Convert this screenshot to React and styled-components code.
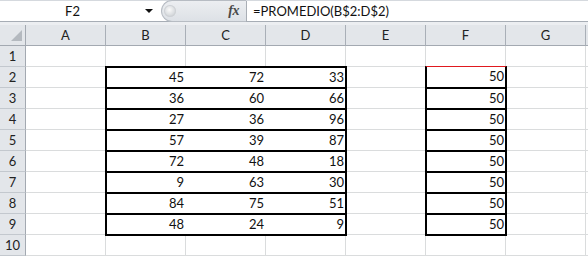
import React from 'react';
import styled, { createGlobalStyle } from 'styled-components';

const GlobalStyle = createGlobalStyle`
  html, body {
    margin: 0;
    padding: 0;
    background: #fff;
  }
  body {
    font-family: Lato, "Noto Sans", sans-serif;
    font-size: 13px;
    color: #111;
    overflow: hidden;
  }
`;

const Window = styled.div`
  width: 588px;
  height: 257px;
  overflow: hidden;
  display: flex;
  flex-direction: column;
  background: #fff;
`;

const FormulaBar = styled.div`
  display: flex;
  height: 22px;
  box-sizing: border-box;
  border-top: 1px solid #d5d9de;
  border-bottom: 1px solid #a7adb5;
`;

const NameBox = styled.div`
  width: 161px;
  display: flex;
  align-items: center;
  background: #fff;
`;

const NameText = styled.span`
  width: 145px;
  text-align: center;
`;

const FxPanel = styled.div`
  width: 85px;
  box-sizing: border-box;
  display: flex;
  align-items: center;
  justify-content: space-between;
  padding: 0 7px 0 2px;
  background: linear-gradient(#eceef1, #dde1e6);
  border: 1px solid #b7bcc3;
  border-right: none;
  border-radius: 11px 0 0 11px;
  margin-top: -1px;
  margin-bottom: -1px;
`;

const Knob = styled.span`
  width: 12px;
  height: 12px;
  border-radius: 50%;
  background: radial-gradient(circle at 45% 40%, #fafafa 0%, #d9dcdf 55%, #b9bdc2 100%);
  box-shadow: inset 0 0 0 1px #cfd2d6;
`;

const Fx = styled.span`
  font-family: "Liberation Serif", "DejaVu Serif", serif;
  font-style: italic;
  font-weight: bold;
  font-size: 14px;
  color: #4a4a4a;
  letter-spacing: -0.5px;
`;

const FormulaInput = styled.div`
  flex: 1;
  display: flex;
  align-items: center;
  padding-left: 6px;
  border-left: 1px solid #a9aeb5;
  background: #fff;
`;

const Strip = styled.div`
  height: 4px;
  box-sizing: border-box;
  background: #eceef1;
  border-bottom: 1px solid #a9aeb5;
`;

const Sheet = styled.div`
  display: grid;
  grid-template-columns: 26px repeat(7, 80px) 2px;
  grid-auto-rows: 21px;
  margin-top: -1px;
`;

const Cell = styled.div`
  box-sizing: border-box;
  border-right: ${p => (p.$last ? 'none' : '1px solid #dadcdd')};
  border-bottom: 1px solid #dadcdd;
  background: #fff;
`;

const Corner = styled.div`
  box-sizing: border-box;
  background: #e3e6ea;
  border-right: 1px solid #a3a9b1;
  border-bottom: 1px solid #a3a9b1;
  display: flex;
  align-items: flex-end;
  justify-content: flex-end;
  padding: 0 3px 4px 0;
`;

const ColHeader = styled.div`
  box-sizing: border-box;
  background: #e3e6ea;
  border-right: ${p => (p.$last ? 'none' : '1px solid #a9afb7')};
  border-bottom: 1px solid #a3a9b1;
  text-align: center;
  line-height: 20px;
  color: #222;
`;

const RowHeader = styled.div`
  box-sizing: border-box;
  background: #e3e6ea;
  border-right: 1px solid #a3a9b1;
  border-bottom: 1px solid #c3c8ce;
  text-align: center;
  line-height: 20px;
  color: #222;
`;

const Group = styled.div`
  position: relative;
  z-index: 1;
  grid-column: span 3;
  display: flex;
  background: #fff;
  outline: 2px solid #000;
  outline-offset: -1px;
`;

const Value = styled.span`
  width: 80px;
  box-sizing: border-box;
  text-align: right;
  padding-right: 2px;
  line-height: 20px;
`;

const BoxCell = styled.div`
  position: relative;
  z-index: 2;
  box-sizing: border-box;
  background: #fff;
  text-align: right;
  padding-right: 2px;
  line-height: 20px;
  outline: 2px solid #000;
  outline-offset: -1px;
`;

const ActiveCell = styled.div`
  position: relative;
  z-index: 1;
  box-sizing: border-box;
  margin: -1px;
  background: #fff;
  text-align: right;
  padding-right: 1px;
  line-height: 19px;
  border: 2px solid #000;
  border-top: 1px solid #e0191f;
`;

const columns = ['A', 'B', 'C', 'D', 'E', 'F', 'G'];

const data = [
  [45, 72, 33],
  [36, 60, 66],
  [27, 36, 96],
  [57, 39, 87],
  [72, 48, 18],
  [9, 63, 30],
  [84, 75, 51],
  [48, 24, 9],
];

const Triangle = () => (
  <svg width="11" height="11" viewBox="0 0 11 11">
    <polygon points="11,0 11,11 0,11" fill="#b4b9bf" />
  </svg>
);

const Arrow = () => (
  <svg width="8" height="4" viewBox="0 0 8 4">
    <polygon points="0,0 8,0 4,4" fill="#111" />
  </svg>
);

const PlainRow = ({ n }) => (
  <>
    <RowHeader>{n}</RowHeader>
    {columns.map(c => <Cell key={c} />)}
    <Cell $last />
  </>
);

const DataRow = ({ n, values, average }) => (
  <>
    <RowHeader>{n}</RowHeader>
    <Cell />
    <Group>
      {values.map((v, i) => <Value key={i}>{v}</Value>)}
    </Group>
    <Cell />
    {n === 2 ? <ActiveCell>{average}</ActiveCell> : <BoxCell>{average}</BoxCell>}
    <Cell />
    <Cell $last />
  </>
);

export default function App() {
  return (
    <Window>
      <GlobalStyle />
      <FormulaBar>
        <NameBox>
          <NameText>F2</NameText>
          <Arrow />
        </NameBox>
        <FxPanel>
          <Knob />
          <Fx>fx</Fx>
        </FxPanel>
        <FormulaInput>=PROMEDIO(B$2:D$2)</FormulaInput>
      </FormulaBar>
      <Strip />
      <Sheet>
        <Corner><Triangle /></Corner>
        {columns.map(c => <ColHeader key={c}>{c}</ColHeader>)}
        <ColHeader $last />
        <PlainRow n={1} />
        {data.map((row, i) => (
          <DataRow key={i} n={i + 2} values={row} average={50} />
        ))}
        <PlainRow n={10} />
      </Sheet>
    </Window>
  );
}
